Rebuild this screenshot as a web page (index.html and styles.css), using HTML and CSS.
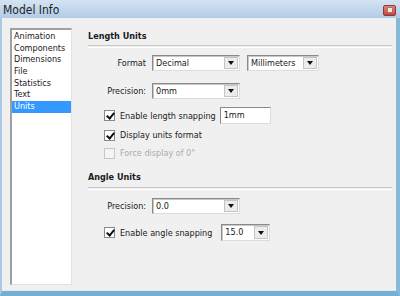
FILE: index.html
```html
<!DOCTYPE html>
<html lang="en">
<head>
  <meta charset="UTF-8">
  <meta name="viewport" content="width=device-width, initial-scale=1.0">
  <title>Model Info</title>
  <link rel="stylesheet" href="styles.css">
</head>
<body>
  <div class="window">
    <div class="titlebar">
      <span class="title">Model Info</span>
      <span class="close-btn"><span class="close-glyph"></span></span>
    </div>

    <div class="frame">
      <!-- 左側分類列表 -->
      <ul class="nav-list">
        <li>Animation</li>
        <li>Components</li>
        <li>Dimensions</li>
        <li>File</li>
        <li>Statistics</li>
        <li>Text</li>
        <li class="selected">Units</li>
      </ul>

      <!-- 單位設定 -->
      <div class="panel">
        <h2 class="group-title">Length Units</h2>
        <div class="rule"></div>

        <div class="row row-format">
          <span class="field-label">Format</span>
          <div class="combo combo-wide"><span class="combo-value">Decimal</span><span class="combo-btn"><span class="arrow"></span></span></div>
          <div class="combo combo-unit"><span class="combo-value">Millimeters</span><span class="combo-btn"><span class="arrow"></span></span></div>
        </div>

        <div class="row row-precision">
          <span class="field-label">Precision:</span>
          <div class="combo combo-wide"><span class="combo-value">0mm</span><span class="combo-btn"><span class="arrow"></span></span></div>
        </div>

        <div class="check-row check-snap">
          <span class="checkbox checked"></span>
          <span class="check-text">Enable length snapping</span>
          <div class="textbox">1mm</div>
        </div>

        <div class="check-row check-display">
          <span class="checkbox checked"></span>
          <span class="check-text">Display units format</span>
        </div>

        <div class="check-row check-force disabled">
          <span class="checkbox"></span>
          <span class="check-text">Force display of 0"</span>
        </div>

        <h2 class="group-title angle-title">Angle Units</h2>
        <div class="rule"></div>

        <div class="row row-angle">
          <span class="field-label">Precision:</span>
          <div class="combo combo-wide"><span class="combo-value">0.0</span><span class="combo-btn"><span class="arrow"></span></span></div>
        </div>

        <div class="check-row check-angle">
          <span class="checkbox checked"></span>
          <span class="check-text">Enable angle snapping</span>
          <div class="combo combo-small"><span class="combo-value">15.0</span><span class="combo-btn"><span class="arrow"></span></span></div>
        </div>
      </div>
    </div>
  </div>
</body>
</html>
```

FILE: styles.css
```css
body {
  margin: 0;
  font-family: "DejaVu Sans Condensed", "DejaVu Sans", sans-serif;
  font-stretch: condensed;
  font-size: 9px;
  color: #1a1a1a;
  background-color: #f0f0f0;
}

.window {
  width: 400px;
  height: 296px;
  display: flex;
  flex-direction: column;
  overflow: hidden;
}

.titlebar {
  height: 18px;
  flex: none;
  display: flex;
  align-items: center;
  justify-content: space-between;
  padding: 2px 4px 0 3px;
  box-sizing: border-box;
  background: linear-gradient(#d6e4f2, #b0cbe6);
}

.title {
  font-size: 12px;
  color: #1e1e1e;
}

.close-btn {
  width: 13px;
  height: 11px;
  box-sizing: border-box;
  border: 1px solid #8e3a32;
  border-radius: 2px;
  background: linear-gradient(#e2867a, #c4453a);
  display: flex;
  align-items: center;
  justify-content: center;
}

.close-glyph {
  width: 4px;
  height: 4px;
  background-color: #f2e4e0;
  border: 1px solid #a9756d;
}

.frame {
  flex: 1;
  display: flex;
  border-left: 2px solid #a9c9e4;
  border-right: 4px solid #86bbd8;
  border-bottom: 5px solid #74aed0;
  box-shadow: inset 0 -1px 0 #dce9f2;
  background-color: #f0f0f0;
}

.nav-list {
  list-style: none;
  margin: 10px 0 6px 8px;
  padding: 1px 0 0 0;
  width: 62px;
  box-sizing: border-box;
  background-color: #ffffff;
  border-top: 2px solid #a0a0a0;
  border-left: 2px solid #a0a0a0;
  border-right: 1px solid #e3e3e3;
  border-bottom: 1px solid #e3e3e3;
}

.nav-list li {
  height: 11.7px;
  line-height: 11.7px;
  padding-left: 2px;
  white-space: nowrap;
  overflow: hidden;
}

.nav-list li.selected {
  background-color: #3399ff;
  color: #ffffff;
}

.panel {
  flex: 1;
  margin-left: 16px;
  margin-right: 4px;
  padding-top: 12px;
}

.group-title {
  margin: 0;
  font-size: 9px;
  font-weight: bold;
  line-height: 12px;
}

.angle-title {
  margin-top: 12px;
}

.rule {
  height: 1px;
  border-top: 1px solid #c8c8c8;
  border-bottom: 1px solid #ffffff;
  margin-top: 3px;
}

.angle-title + .rule {
  margin-top: 4px;
}

.row {
  display: flex;
  align-items: center;
  gap: 6px;
}

.field-label {
  width: 58px;
  text-align: right;
  flex: none;
}

.row-format {
  margin-top: 7px;
}

.row-precision {
  margin-top: 12px;
}

.row-angle {
  margin-top: 8px;
}

.combo {
  height: 16px;
  box-sizing: border-box;
  display: flex;
  align-items: stretch;
  background-color: #ffffff;
  border-top: 1px solid #8a8a8a;
  border-left: 1px solid #8a8a8a;
  border-right: 1px solid #dcdcdc;
  border-bottom: 1px solid #dcdcdc;
  box-shadow: inset 1px 1px 0 #c8c8c8;
}

.combo-wide {
  width: 88px;
}

.combo-unit {
  width: 72px;
  margin-left: 1px;
}

.combo-small {
  width: 49px;
  height: 17px;
  margin-left: 9px;
}

.combo-value {
  flex: 1;
  padding-left: 3px;
  line-height: 14px;
  white-space: nowrap;
  overflow: hidden;
}

.combo-btn {
  width: 14px;
  margin: 1px;
  box-sizing: border-box;
  background-color: #ececec;
  border: 1px solid #c4c4c4;
  display: flex;
  align-items: center;
  justify-content: center;
}

.arrow {
  width: 0;
  height: 0;
  border-left: 3.5px solid transparent;
  border-right: 3.5px solid transparent;
  border-top: 4px solid #111111;
}

.check-row {
  display: flex;
  align-items: center;
  padding-left: 16px;
  height: 12px;
}

.check-snap {
  margin-top: 8px;
  height: 17px;
}

.check-display {
  margin-top: 5px;
}

.check-force {
  margin-top: 6px;
}

.check-angle {
  margin-top: 10px;
  height: 17px;
}

.checkbox {
  width: 11px;
  height: 11px;
  box-sizing: border-box;
  flex: none;
  border: 1px solid #8a8a8a;
  background-color: #ffffff;
  margin-right: 5px;
  position: relative;
}

.checkbox.checked::after {
  content: "";
  position: absolute;
  left: 2.5px;
  top: 0px;
  width: 3px;
  height: 6px;
  border-right: 2px solid #111111;
  border-bottom: 2px solid #111111;
  transform: rotate(40deg);
}

.disabled .checkbox {
  border-color: #c6c6c6;
  background-color: #f4f4f4;
}

.disabled .check-text {
  color: #acacac;
}

.textbox {
  width: 51px;
  height: 17px;
  box-sizing: border-box;
  margin-left: 4px;
  padding-left: 3px;
  line-height: 15px;
  background-color: #ffffff;
  border-top: 1px solid #8a8a8a;
  border-left: 1px solid #8a8a8a;
  border-right: 1px solid #dcdcdc;
  border-bottom: 1px solid #dcdcdc;
}
```
